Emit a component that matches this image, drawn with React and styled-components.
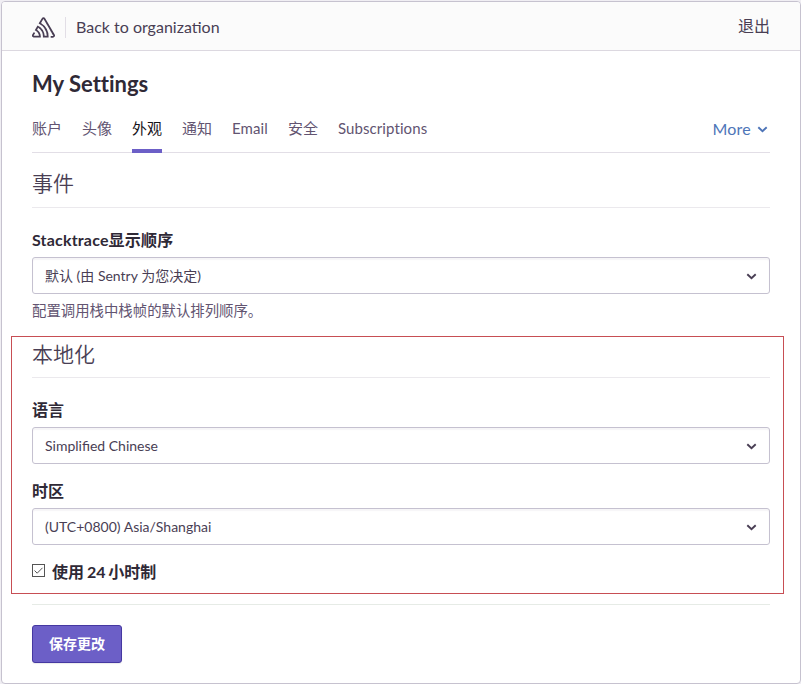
import React from "react";
import styled, { createGlobalStyle } from "styled-components";
import { SiSentry } from "react-icons/si";

const GlobalStyle = createGlobalStyle`
  * { box-sizing: border-box; }
  html, body { margin: 0; }
  body {
    background: #f0eef3;
    font-family: Lato, "Noto Sans CJK SC", sans-serif;
    color: #493e54;
    white-space: nowrap;
    overflow: hidden;
  }
`;

const Page = styled.div`
  width: 801px;
  height: 684px;
  padding: 1px 0 0 1px;
`;

const Card = styled.main`
  height: 683px;
  border: 1px solid #c6c2cf;
  border-radius: 4px;
  background: #fff;
  overflow: hidden;
`;

const Header = styled.header`
  display: flex;
  align-items: center;
  height: 49px;
  padding: 0 30px;
  background: #fbfbfb;
  border-bottom: 1px solid #dcd8e0;
`;

const Logo = styled(SiSentry)`
  width: 23px;
  height: 23px;
  margin-top: 2px;
  color: #493e54;
`;

const Divider = styled.span`
  width: 1px;
  height: 21px;
  margin: 2px 10px 0 10px;
  background: #e2dee6;
`;

const BackLink = styled.a`
  flex: 1;
  padding-top: 2px;
  font-size: 16px;
  line-height: 24px;
`;

const SignOut = styled.a`
  margin-top: -1px;
  font-size: 16px;
  line-height: 24px;
`;

const Body = styled.div`
  padding: 18px 30px 0;
`;

const PageTitle = styled.h1`
  margin: 0;
  height: 30px;
  font-size: 22px;
  line-height: 30px;
  font-weight: 700;
  font-variant-ligatures: none;
  color: #2f2936;
`;

const Tabs = styled.nav`
  display: flex;
  gap: 20px;
  height: 54px;
  border-bottom: 1px solid #e2dee6;
`;

const Tab = styled.a`
  height: 54px;
  padding-top: 17px;
  font-size: 15px;
  line-height: 24px;
  letter-spacing: ${(p) => (p.$latin ? "0.09px" : "0")};
  color: ${(p) => (p.$active ? "#161319" : "#625471")};
  border-bottom: ${(p) => (p.$active ? "4px solid #6c5fc7" : "0")};
`;

const More = styled.a`
  display: flex;
  align-items: center;
  gap: 6px;
  height: 24px;
  margin: 17px 2px 0 auto;
  font-size: 16px;
  letter-spacing: 0.25px;
  color: #4e75b8;
`;

const Group = styled.section``;

const HighlightedGroup = styled(Group)`
  height: 258px;
  margin: 13px -14px 0 -21px;
  padding: 0 13px 0 20px;
  border: 1px solid #c74e54;
`;

const SectionTitle = styled.h2`
  height: ${(p) => p.$height}px;
  margin: 0;
  padding-top: ${(p) => p.$top}px;
  font-size: 21px;
  line-height: 32px;
  font-weight: 350;
  border-bottom: 1px solid #ebe9ed;
`;

const Label = styled.div`
  height: 24px;
  margin: ${(p) => p.$top}px 0 5px;
  font-size: 16px;
  line-height: 24px;
  letter-spacing: ${(p) => p.$tracking || "0"};
  font-weight: 700;
  color: #2f2936;
`;

const Select = styled.div`
  display: flex;
  align-items: center;
  justify-content: space-between;
  height: 37px;
  padding: 0 12px;
  font-size: 14px;
  line-height: 20px;
  border: 1px solid #c5c1d0;
  border-radius: 3px;
  box-shadow: inset 0 2px 1px rgba(70, 60, 90, 0.05);
`;

const Help = styled.p`
  height: 24px;
  margin: 5px 0 0;
  font-size: 14.4px;
  line-height: 24px;
  color: #625471;
`;

const CheckRow = styled.div`
  display: flex;
  align-items: center;
  gap: 7px;
  height: 24px;
  margin-top: 14px;
  font-size: 16px;
  word-spacing: -1px;
  font-weight: 700;
  color: #2f2936;
`;

const CheckIcon = styled.svg`
  width: 13px;
  height: 13px;
  margin-top: -2px;
`;

const Actions = styled.footer`
  margin-top: 10px;
  padding-top: 20px;
  border-top: 1px solid #e6ebe6;
`;

const SaveButton = styled.button`
  display: block;
  width: 90px;
  height: 38px;
  padding: 0;
  font: 700 14px/20px Lato, "Noto Sans CJK SC", sans-serif;
  color: #fff;
  background: #6c5fc7;
  border: 1px solid #4538a1;
  border-radius: 3px;
  box-shadow: 0 1px 1px rgba(0, 0, 0, 0.08);
`;

const ChevronIcon = styled.svg`
  width: 11px;
  height: 7px;
  margin-top: 2px;
`;

const Chevron = () => (
  <ChevronIcon viewBox="0 0 11 7" fill="none">
    <path d="M1.3 1.2 5.5 5.2 9.7 1.2" stroke="currentColor" strokeWidth="1.9" />
  </ChevronIcon>
);

const Field = ({ label, value, top, tracking }) => (
  <>
    <Label $top={top} $tracking={tracking}>{label}</Label>
    <Select>
      <span>{value}</span>
      <Chevron />
    </Select>
  </>
);

const tabs = ["账户", "头像", "外观", "通知", "Email", "安全", "Subscriptions"];

export default function App() {
  return (
    <Page>
      <GlobalStyle />
      <Card>
        <Header>
          <Logo />
          <Divider />
          <BackLink>Back to organization</BackLink>
          <SignOut>退出</SignOut>
        </Header>
        <Body>
          <PageTitle>My Settings</PageTitle>
          <Tabs>
            {tabs.map((t) => (
              <Tab key={t} $active={t === "外观"} $latin={/^[A-Z]/.test(t)}>{t}</Tab>
            ))}
            <More>
              More <Chevron />
            </More>
          </Tabs>
          <Group>
            <SectionTitle $height={55} $top={14}>事件</SectionTitle>
            <Field
              label="Stacktrace显示顺序"
              value="默认 (由 Sentry 为您决定)"
              top={20}
              tracking="0.18px"
            />
            <Help>配置调用栈中栈帧的默认排列顺序。</Help>
          </Group>
          <HighlightedGroup>
            <SectionTitle $height={41} $top={1}>本地化</SectionTitle>
            <Field label="语言" value="Simplified Chinese" top={20} />
            <Field label="时区" value="(UTC+0800) Asia/Shanghai" top={15} />
            <CheckRow>
              <CheckIcon viewBox="0 0 13 13" fill="none" stroke="#555">
                <rect x="0.5" y="0.5" width="12" height="12" />
                <path d="M2.5 6.5 5.2 9.2 10.5 3.8" />
              </CheckIcon>
              使用 24 小时制
            </CheckRow>
          </HighlightedGroup>
          <Actions>
            <SaveButton>保存更改</SaveButton>
          </Actions>
        </Body>
      </Card>
    </Page>
  );
}
